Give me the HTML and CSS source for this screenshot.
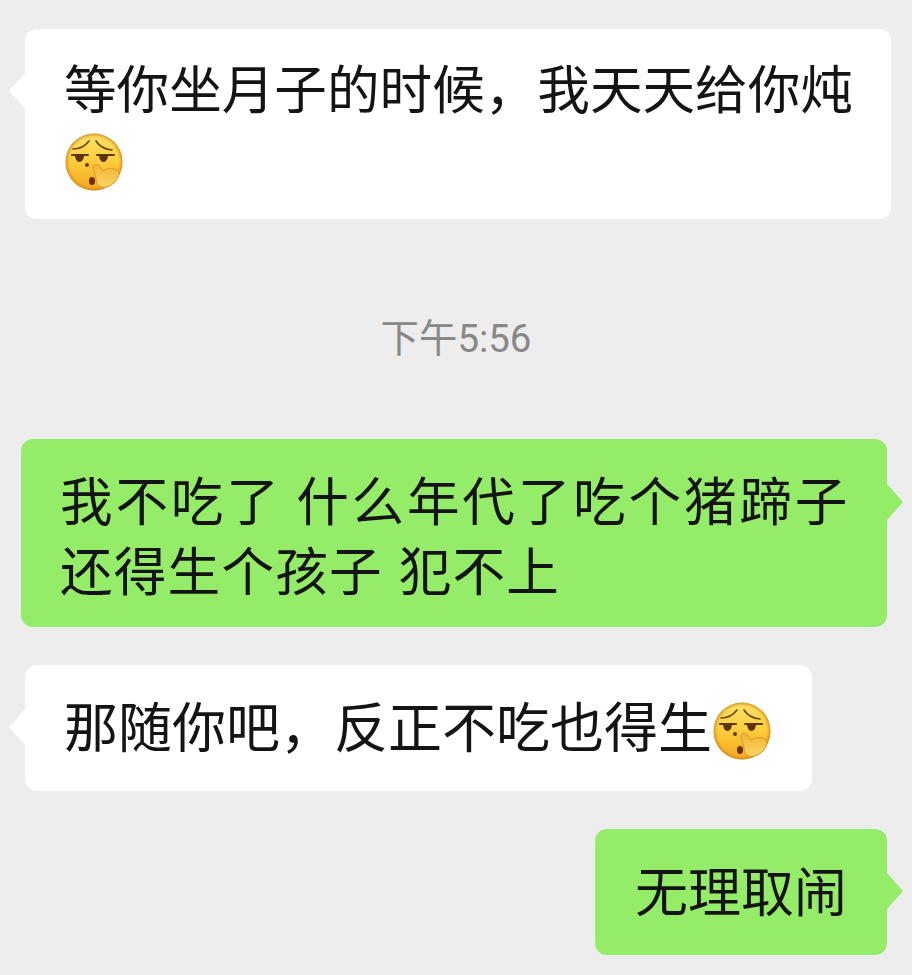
FILE: index.html
```html
<!DOCTYPE html>
<html lang="zh-CN">

<head>
    <meta charset="utf-8">
    <title>聊天记录</title>
    <meta name="viewport" content="width=device-width, initial-scale=1">
    <link rel="stylesheet" href="styles.css">
</head>

<body>
    <!-- shared emoji, used twice in the chat -->
    <svg class="defs" width="0" height="0" aria-hidden="true">
        <defs>
            <linearGradient id="face" x1="0" y1="0" x2="0" y2="1">
                <stop offset="0" stop-color="#fbe06a"/>
                <stop offset="0.45" stop-color="#fcd03e"/>
                <stop offset="1" stop-color="#f5a623"/>
            </linearGradient>
            <radialGradient id="rim" cx="50%" cy="50%" r="50%">
                <stop offset="0.86" stop-color="#e08a18" stop-opacity="0"/>
                <stop offset="1" stop-color="#c97d1c" stop-opacity="0.75"/>
            </radialGradient>
            <linearGradient id="hand" x1="0" y1="0" x2="0" y2="1">
                <stop offset="0" stop-color="#f2b530"/>
                <stop offset="1" stop-color="#fad465"/>
            </linearGradient>
            <symbol id="smirk" viewBox="0 0 58 58">
                <circle cx="29" cy="29" r="28.5" fill="url(#face)"/>
                <circle cx="29" cy="29" r="28.5" fill="url(#rim)"/>
                <path d="M8 16 Q18 16 24 8" fill="none" stroke="#6b4312" stroke-width="1.6" stroke-linecap="round"/>
                <path d="M31 8 Q36 16 47 17" fill="none" stroke="#6b4312" stroke-width="1.6" stroke-linecap="round"/>
                <path d="M7 22 H23" stroke="#5b3a12" stroke-width="2" stroke-linecap="round"/>
                <path d="M32 22 H49" stroke="#5b3a12" stroke-width="2" stroke-linecap="round"/>
                <path d="M10 22.5 H19 Q18.500 29 14.500 29 Q10.500 29 10 22.5Z" fill="#5e3208"/>
                <path d="M34 22.5 H43 Q42.500 29 38.500 29 Q34.500 29 34 22.5Z" fill="#5e3208"/>
                <circle cx="22" cy="32" r="2" fill="#6b3a0c"/>
                <ellipse cx="27" cy="48" rx="3" ry="4" fill="#6b2f0a"/>
                <path d="M28 34 C29 30 33 31 35 34 L38 38 C42 35 48 35 52 37 C55 39 54 45 50 49 C45 54 38 56 34 53 C31 51 31 45 30 41 C29 38 27.500 36 28 34Z" fill="url(#hand)" stroke="#d9962a" stroke-width="1"/>
            </symbol>
        </defs>
    </svg>

    <main class="chat">
        <div class="bubble from-them first">
            等你坐月子的时候，我天天给你炖<br>
            <svg class="emoji"><use href="#smirk"/></svg>
        </div>

        <div class="time">下午5:56</div>

        <div class="bubble from-me double">
            我不吃了 什么年代了吃个猪蹄子<br>
            还得生个孩子 犯不上
        </div>

        <div class="bubble from-them third">
            那随你吧，反正不吃也得生<svg class="emoji"><use href="#smirk"/></svg>
        </div>

        <div class="bubble from-me last">
            无理取闹
        </div>
    </main>
</body>

</html>
```

FILE: styles.css
```css
body {
    margin: 0;
    background-color: #ededed;
    color: #141414;
    font-family: "Noto Sans CJK SC", "Noto Sans", sans-serif;
}

.defs {
    display: block;
}

.chat {
    display: flex;
    flex-direction: column;
    gap: 38px;
    padding: 29px 25px 20px 25px;
    height: 975px;
    box-sizing: border-box;
}

.bubble {
    position: relative;
    width: fit-content;
    box-sizing: border-box;
    padding: 25px 40px;
    border-radius: 12px;
    font-size: 52.6px;
    line-height: 70px;
    white-space: nowrap;
}

.bubble::after {
    content: "";
    position: absolute;
    top: 44px;
    width: 16px;
    height: 36px;
}

.from-them {
    background-color: #ffffff;
}

.from-them::after {
    left: -16px;
    background-color: #ffffff;
    clip-path: polygon(100% 0, 0 50%, 100% 100%);
}

.from-me {
    align-self: flex-end;
    background-color: #95ec69;
}

.from-me::after {
    right: -16px;
    background-color: #95ec69;
    clip-path: polygon(0 0, 100% 50%, 0 100%);
}

.first {
    padding: 22px 38px 28px 39px;
    height: 190px;
}

.double {
    align-self: flex-start;
    margin-left: -4px;
    padding: 24px 39px 24px 39px;
    width: 866px;
    height: 188px;
    letter-spacing: 1.2px;
    word-spacing: 3px;
}

.double::first-line {
    letter-spacing: 2.8px;
    word-spacing: 0;
}

.double::after {
    top: 45px;
}

.third {
    padding: 25px 41px 31px 39px;
    height: 126px;
    font-size: 54px;
}

.last {
    padding: 25px 40px 31px;
    height: 126px;
    font-size: 53px;
}

.emoji {
    width: 58px;
    height: 58px;
    margin-left: 1px;
    vertical-align: -12px;
}

.time {
    align-self: center;
    margin: 57px 0 37px;
    height: 50px;
    color: #888888;
    font-family: Roboto, "Noto Sans CJK SC", sans-serif;
    font-size: 38.4px;
    line-height: 50px;
}
```
